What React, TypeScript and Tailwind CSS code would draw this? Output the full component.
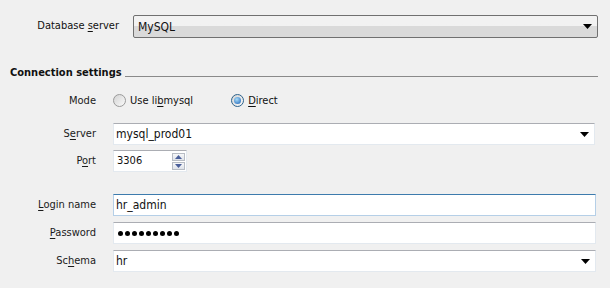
import type { ReactNode } from "react";

const font = "font-['DejaVu_Sans_Condensed','DejaVu_Sans',sans-serif] font-stretch-condensed";

function Arrow() {
  return (
    <svg width="9" height="5" viewBox="0 0 9 5" className="shrink-0">
      <path d="M0 0h9L4.5 5z" fill="#000" />
    </svg>
  );
}

function Field({
  children,
  focused,
  combo,
  className = "",
}: {
  children: ReactNode;
  focused?: boolean;
  combo?: boolean;
  className?: string;
}) {
  return (
    <div
      className={`flex h-[22px] items-center border bg-white pl-[2px] pr-[5px] ${
        focused
          ? "border-[#b5cfe7] border-t-[#3d7bad]"
          : "border-[#e3e9ef] border-t-[#abadb3]"
      } ${className}`}
    >
      <span className="flex-1 whitespace-nowrap text-[12px] leading-normal">{children}</span>
      {combo && <Arrow />}
    </div>
  );
}

function Label({ children }: { children: ReactNode }) {
  return <div className="w-[96px] shrink-0 text-right leading-normal text-[#1a1a1a]">{children}</div>;
}

function Radio({ checked }: { checked?: boolean }) {
  return (
    <span
      className={`flex h-[13px] w-[13px] items-center justify-center rounded-full border bg-gradient-to-br from-[#d4d4d4] to-[#fafafa] ${
        checked ? "border-[#2c628b]" : "border-[#9a9a9a]"
      }`}
    >
      {checked && (
        <span className="h-[7px] w-[7px] rounded-full bg-[radial-gradient(circle_at_40%_35%,#a6dcfa,#1a5fb4)]" />
      )}
    </span>
  );
}

export default function App() {
  return (
    <div className={`h-[288px] w-[610px] bg-[#f0f0f0] pr-[12px] text-[11px] leading-none text-[#111] ${font}`}>
      <div className="flex items-center pt-[15px]">
        <div className="w-[119px] text-right leading-normal">
          Database <u className="underline-offset-2">s</u>erver
        </div>
        <div className="ml-[14px] flex h-[23px] flex-1 items-center rounded-[2px] border border-[#707070] bg-gradient-to-b from-[#f2f2f2] from-50% to-[#dadada] to-50% pl-[4px] pr-[5px]">
          <span className="flex-1 text-[12px]">MySQL</span>
          <Arrow />
        </div>
      </div>

      <div className="mt-[27px] flex items-center pl-[10px]">
        <span className="text-[11px] font-bold leading-normal">Connection settings</span>
        <div className="ml-[3px] mt-[7px] h-px flex-1 bg-[#8a8a8a]" />
      </div>

      <div className="mt-[11px] flex items-center">
        <Label>Mode</Label>
        <div className="ml-[17px] flex items-center gap-[4px]">
          <Radio />
          <span className="leading-normal">
            Use li<u className="underline-offset-2">b</u>mysql
          </span>
        </div>
        <div className="ml-[38px] flex items-center gap-[4px]">
          <Radio checked />
          <span className="leading-normal">
            <u className="underline-offset-2">D</u>irect
          </span>
        </div>
      </div>

      <div className="mt-[14px] flex flex-col gap-[5px] pr-[3px]">
        <div className="flex items-center">
          <Label>
            S<u className="underline-offset-2">e</u>rver
          </Label>
          <Field combo className="ml-[17px] flex-1">
            mysql_prod01
          </Field>
        </div>
        <div className="flex items-center">
          <Label>
            P<u className="underline-offset-2">o</u>rt
          </Label>
          <div className="ml-[17px] flex h-[22px] w-[74px] items-center border border-[#e3e9ef] border-t-[#abadb3] bg-white pl-[3px] pr-[1px]">
            <span className="flex-1 leading-normal">3306</span>
            <div className="flex flex-col gap-px">
              {[0, 1].map((i) => (
                <div
                  key={i}
                  className="flex h-[8px] w-[13px] items-center justify-center border border-[#b7bcc4] bg-gradient-to-b from-[#f6f7f9] to-[#dfe3ea]"
                >
                  <svg width="7" height="4" viewBox="0 0 7 4">
                    <path d={i === 0 ? "M0 4L3.5 0L7 4z" : "M0 0h7L3.5 4z"} fill="#4a5f9a" />
                  </svg>
                </div>
              ))}
            </div>
          </div>
        </div>
      </div>

      <div className="mt-[22px] flex flex-col gap-[6px] pr-[2px]">
        <div className="flex items-center">
          <Label>
            <u className="underline-offset-2">L</u>ogin name
          </Label>
          <Field focused className="ml-[17px] flex-1">
            hr_admin
          </Field>
        </div>
        <div className="flex items-center">
          <Label>
            <u className="underline-offset-2">P</u>assword
          </Label>
          <Field className="ml-[17px] flex-1">
            <span className="flex gap-[2px] pl-[2px]">
              {Array.from({ length: 9 }).map((_, i) => (
                <span key={i} className="h-[5px] w-[5px] rounded-full bg-black" />
              ))}
            </span>
          </Field>
        </div>
        <div className="flex items-center">
          <Label>
            Sc<u className="underline-offset-2">h</u>ema
          </Label>
          <Field combo className="ml-[17px] flex-1">
            hr
          </Field>
        </div>
      </div>
    </div>
  );
}
